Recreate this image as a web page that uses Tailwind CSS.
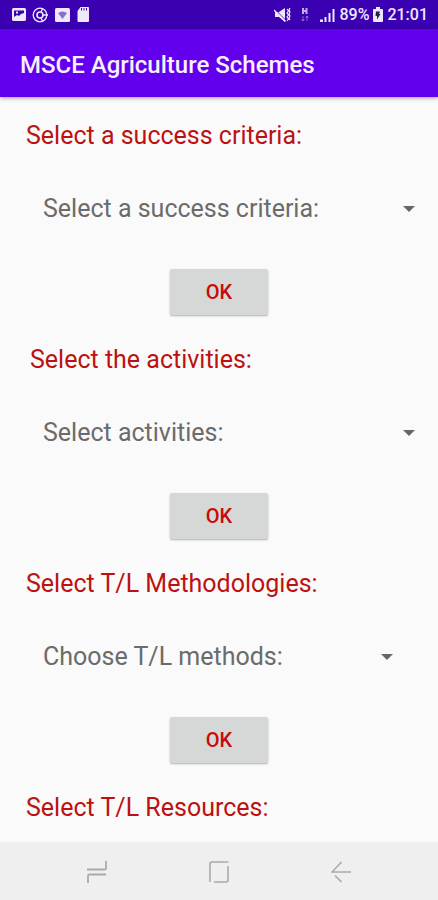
<!DOCTYPE html>
<html lang="en">
<head>
    <meta charset="UTF-8">
    <meta name="viewport" content="width=device-width, initial-scale=1.0">
    <title>MSCE Agriculture Schemes</title>
    <script src="https://cdn.jsdelivr.net/npm/@tailwindcss/browser@4"></script>
</head>
<body class="flex h-screen flex-col overflow-hidden bg-[#fafafa] font-[Roboto,sans-serif]">
    <!-- Status bar -->
    <div class="flex h-[29px] shrink-0 items-center justify-between bg-[#3a00b2] pt-px pr-[10px] pl-3 text-[#eee8fb]">
        <div class="flex items-center gap-[6px]">
            <svg class="h-4 w-[14px]" viewBox="0 0 14 16" fill="currentColor" aria-hidden="true">
                <path fill-rule="evenodd" d="M1.500 1h11a1.500 1.500 0 0 1 1.500 1.500v10a1.500 1.500 0 0 1-1.500 1.500h-11A1.500 1.500 0 0 1 0 12.500v-10A1.500 1.500 0 0 1 1.500 1zM2 3.500V10l3-2 2 1 2-2 3-1V3.500zM4 4.500h2v2H4z"/>
            </svg>
            <svg class="size-4" viewBox="0 0 16 16" fill="none" stroke="currentColor" stroke-width="1.300" aria-hidden="true">
                <circle cx="8" cy="8" r="6.800"/>
                <circle cx="8" cy="8" r="3" stroke-width="1.600"/>
                <path d="M11 8h5M9 11l1.500 3.500M9 5l1.500-3.500"/>
            </svg>
            <svg class="h-4 w-4" viewBox="0 0 16 16" aria-hidden="true">
                <rect x="1" y="1" width="15" height="14" rx="1.500" fill="currentColor"/>
                <path d="M4 6q4.500-3 9 0L8.500 12z" fill="#8a70cd"/>
            </svg>
            <svg class="ml-px h-4 w-3" viewBox="0 0 12 16" fill="currentColor" aria-hidden="true">
                <path d="M3.500 0H11a1 1 0 0 1 1 1v13a1 1 0 0 1-1 1H1.500a1 1 0 0 1-1-1V4z"/>
                <path d="M4.500 1v2.500M7 1v2.500M9.500 1v2.500" stroke="#3a00b2"/>
            </svg>
        </div>
        <div class="flex items-center gap-1">
            <svg class="h-4 w-[17px]" viewBox="0 0 17 16" fill="currentColor" aria-hidden="true">
                <path d="M1 5h4L11 1v14l-6-5H1z"/>
                <path d="M1 2.500l11 11" stroke="#3a00b2" stroke-width="1"/>
                <path d="M0 3l11.500 11.500" stroke="currentColor" stroke-width="1.500"/>
                <path d="M13 2l1.500 2L13 6l1.500 2L13 10l1.500 2-1.500 2M16 1l-1 2 1 2-1 2 1 2-1 2 1 2" fill="none" stroke="currentColor" stroke-width="1.200"/>
            </svg>
            <svg class="mx-1 h-4 w-3" viewBox="0 0 12 16" fill="none" stroke="currentColor" aria-hidden="true">
                <path d="M4 1v6M7.500 1v6M4 4h4" stroke-width="2" opacity=".75"/>
                <path d="M4 9v5M2.500 12L4 14l1.500-2M8 14V9M6.500 11L8 9l1.500 2" opacity=".4"/>
            </svg>
            <svg class="h-4 w-4" viewBox="0 0 16 16" fill="currentColor" aria-hidden="true">
                <path d="M1 12.500h3V15H1zM5.500 10h2v5h-2zM9.500 6h2v9h-2zM13.500 2h2v13h-2z"/>
            </svg>
            <span class="text-base leading-5 font-medium">89%</span>
            <svg class="h-4 w-[10px]" viewBox="0 0 10 16" aria-hidden="true">
                <path d="M3 0h4v2h2a1 1 0 0 1 1 1v11a1 1 0 0 1-1 1H1a1 1 0 0 1-1-1V3a1 1 0 0 1 1-1h2z" fill="currentColor"/>
                <path d="M3 4.500h4L6 7h1.500L4 12.500V9H2.500z" fill="#28204a"/>
            </svg>
            <span class="text-base leading-5 font-medium">21:01</span>
        </div>
    </div>

    <header class="z-10 flex h-[68px] shrink-0 items-center bg-[#6200ee] px-5 pt-1 shadow-[0_1px_4px_rgba(0,0,0,0.4)]">
        <h1 class="text-2xl font-medium text-[#f7f0ff]">MSCE Agriculture Schemes</h1>
    </header>

    <main class="min-h-0 flex-1 overflow-hidden pt-[23px]">
        <form>
            <section class="flex flex-col pb-7">
                <label for="criteria" class="pl-[26px] text-[25px] leading-8 text-[#bd1111]">Select a success criteria:</label>
                <div class="relative mt-[33px] mr-4 ml-[43px]">
                    <select id="criteria" class="h-12 w-full appearance-none bg-transparent pr-10 text-[25px] text-[#6b6b6b]">
                        <option>Select a success criteria:</option>
                    </select>
                    <svg class="pointer-events-none absolute inset-y-0 right-[7px] my-auto h-[6px] w-3" viewBox="0 0 12 6" fill="#666" aria-hidden="true"><path d="M0 0h12L6 6z"/></svg>
                </div>
                <button type="button" class="mt-9 h-[46px] w-[98px] self-center rounded-xs bg-[#d6d8d7] text-xl font-medium text-[#c80b0b] shadow-[0_1px_2px_rgba(0,0,0,0.3)]">OK</button>
            </section>

            <section class="flex flex-col pt-px pb-7">
                <label for="activities" class="pl-[30px] text-[25px] leading-8 text-[#bd1111]">Select the activities:</label>
                <div class="relative mt-[33px] mr-4 ml-[43px]">
                    <select id="activities" class="h-12 w-full appearance-none bg-transparent pr-10 text-[25px] text-[#6b6b6b]">
                        <option>Select activities:</option>
                    </select>
                    <svg class="pointer-events-none absolute inset-y-0 right-[7px] my-auto h-[6px] w-3" viewBox="0 0 12 6" fill="#666" aria-hidden="true"><path d="M0 0h12L6 6z"/></svg>
                </div>
                <button type="button" class="mt-9 h-[46px] w-[98px] self-center rounded-xs bg-[#d6d8d7] text-xl font-medium text-[#c80b0b] shadow-[0_1px_2px_rgba(0,0,0,0.3)]">OK</button>
            </section>

            <section class="flex flex-col pt-px pb-7">
                <label for="methods" class="pl-[26px] text-[25px] leading-8 text-[#bd1111]">Select T/L Methodologies:</label>
                <div class="relative mt-[33px] mr-[38px] ml-[43px]">
                    <select id="methods" class="h-12 w-full appearance-none bg-transparent pr-10 text-[25px] text-[#6b6b6b]">
                        <option>Choose T/L methods:</option>
                    </select>
                    <svg class="pointer-events-none absolute inset-y-0 right-[7px] my-auto h-[6px] w-3" viewBox="0 0 12 6" fill="#666" aria-hidden="true"><path d="M0 0h12L6 6z"/></svg>
                </div>
                <button type="button" class="mt-9 h-[46px] w-[98px] self-center rounded-xs bg-[#d6d8d7] text-xl font-medium text-[#c80b0b] shadow-[0_1px_2px_rgba(0,0,0,0.3)]">OK</button>
            </section>

            <section class="pt-px">
                <h2 class="pl-[26px] text-[25px] leading-8 text-[#bd1111]">Select T/L Resources:</h2>
            </section>
        </form>
    </main>

    <!-- Navigation bar -->
    <nav class="grid h-[58px] shrink-0 grid-cols-3 bg-[#efefef] px-9 pt-px text-[#aaa]">
        <button type="button" aria-label="Recent apps" class="flex items-center justify-center">
            <svg class="h-6 w-5" viewBox="0 0 20 24" fill="none" stroke="currentColor" stroke-width="1.800" aria-hidden="true">
                <path d="M0 9.500h17.500q1.500 0 1.500-1.500V1M19 14.500H2.500Q1 14.500 1 16v7"/>
            </svg>
        </button>
        <button type="button" aria-label="Home" class="flex items-center justify-center">
            <svg class="h-[22px] w-5" viewBox="0 0 20 22" fill="none" stroke="currentColor" stroke-width="1.600" aria-hidden="true">
                <path d="M1 21V3q0-2 2-2h16.500M5 21h12q2 0 2-2V5"/>
            </svg>
        </button>
        <button type="button" aria-label="Back" class="flex items-center justify-center">
            <svg class="h-[22px] w-5" viewBox="0 0 20 22" fill="none" stroke="currentColor" stroke-width="1.600" aria-hidden="true">
                <path d="M20 11H1L10.500 1M4 14.500l6.500 6.500"/>
            </svg>
        </button>
    </nav>
</body>
</html>
